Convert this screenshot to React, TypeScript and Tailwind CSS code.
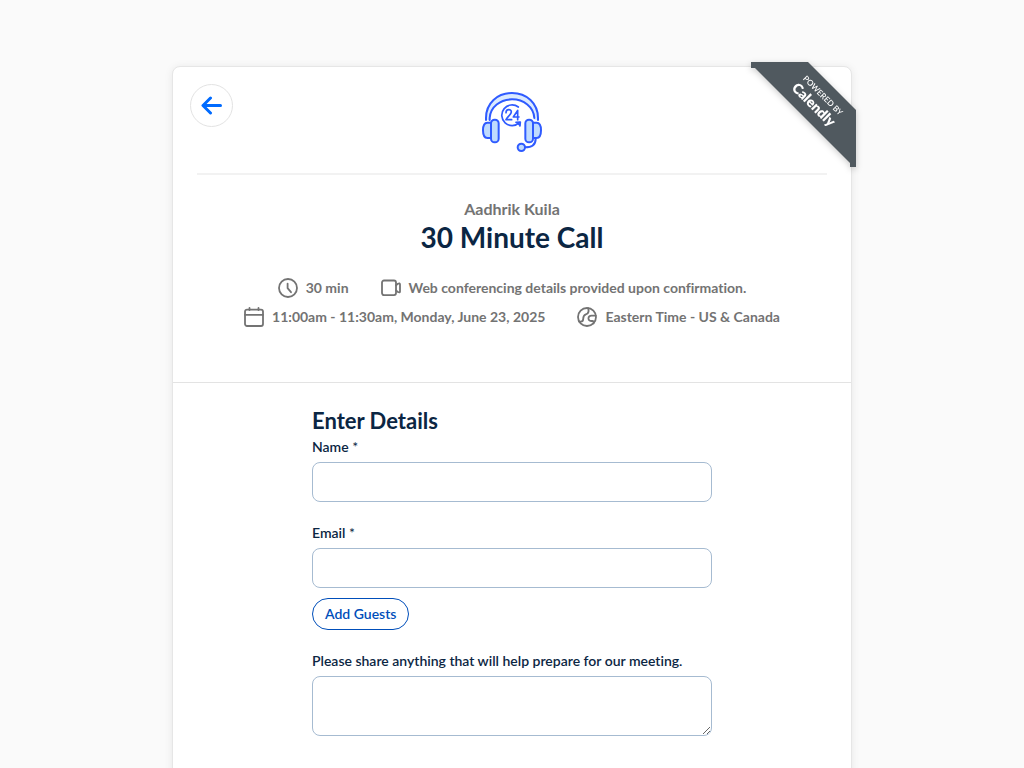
import React from "react";

function HeadsetLogo() {
  return (
    <svg viewBox="0 0 180 180" className="size-[60px]" fill="none" stroke="#2f5bff" strokeWidth="6" strokeLinecap="round" strokeLinejoin="round" role="img" aria-label="24 hour support">
      <path d="M12 84V78C12 34 46 3 90 3s78 31 78 75v6h-11V78c-3-32-33-55-67-55S26 46 23 78v6z" fill="#dbeafe" stroke="none" />
      <path d="M12 84V78C12 34 46 3 90 3s78 31 78 75v6" />
      <path d="M23 84V78C25 45 55 22 90 22s65 23 67 56" />
      <path d="M27 92H16C7 92 3 101 3 115s4 23 13 23h11z" fill="#bfdbfe" />
      <path d="M153 92h11c9 0 13 9 13 23s-4 23-13 23h-11z" fill="#bfdbfe" />
      <rect x="27" y="83" width="23" height="68" rx="11" fill="#bfdbfe" />
      <rect x="130" y="83" width="23" height="68" rx="11" fill="#bfdbfe" />
      <path d="M161 140c0 18-12 26-32 26" />
      <circle cx="118" cy="166" r="11" fill="#bfdbfe" />
      <path d="M109 45A31 31 0 1 0 112 92" strokeWidth="5" />
      <path d="M102 91l13-1-1 12M104 91l10 9" strokeWidth="5" />
      <path d="M72 62c0-12 16-12 16-2 0 8-12 13-16 23h17" strokeWidth="5" />
      <path d="M107 83V55L94 75h17" strokeWidth="5" />
    </svg>
  );
}

const iconProps = {
  viewBox: "0 0 20 20",
  className: "size-5 shrink-0",
  fill: "none",
  stroke: "currentColor",
  strokeWidth: 1.8,
  strokeLinecap: "round" as const,
  strokeLinejoin: "round" as const,
  "aria-hidden": true,
};

function ClockIcon() {
  return (
    <svg {...iconProps}>
      <circle cx="10" cy="10" r="9" />
      <path d="M9.6 5.6v4.6l3.4 4" />
    </svg>
  );
}

function VideoIcon() {
  return (
    <svg {...iconProps}>
      <rect x="1" y="2.5" width="14" height="14.6" rx="2" />
      <path d="M15 7.2l2-1.4q2-1 2 .6v7q0 1.600-2 .6l-2-1.400" />
    </svg>
  );
}

function CalendarIcon() {
  return (
    <svg {...iconProps}>
      <rect x="1" y="2.6" width="18" height="16.4" rx="2" />
      <path d="M1 7.8h18M5.5 1v2M14.5 1v2" />
    </svg>
  );
}

function GlobeIcon() {
  return (
    <svg {...iconProps}>
      <circle cx="10" cy="10" r="9" />
      <path d="M2 14.600h1.600c2 0 2.600-1.100 2.600-2.600 0-3.400.9-4 2.600-4.600 2.600-.8 3.400-2.600 2.400-6.200" />
      <path d="M18.800 8.600h-4.300c-4 0-4 5.400-.4 5.400h1.200c1.200 0 1.600 1 1.200 2.400" />
    </svg>
  );
}

function Detail({ icon, children }: { icon: React.ReactNode; children: React.ReactNode }) {
  return (
    <li className="flex h-[29px] items-center gap-2">
      {icon}
      <span>{children}</span>
    </li>
  );
}

function Ribbon() {
  return (
    <a href="#calendly" className="absolute -top-[5px] -right-[5px] block size-[105px] text-white drop-shadow-[0_2px_3px_rgba(0,0,0,0.2)]">
      <span className="flex size-full items-center justify-center bg-[#50595f] pb-7 pl-7 [clip-path:polygon(0_0,57px_0,105px_48px,105px_105px,99px_105px,99px_101px,4px_6px,0_6px)]">
        <span className="flex rotate-45 flex-col items-center whitespace-nowrap">
          <span className="text-[8px] leading-[10px] font-semibold">POWERED BY</span>
          <span className="text-[14px] leading-4 font-extrabold">Calendly</span>
        </span>
      </span>
    </a>
  );
}

const fieldClass = "block w-full rounded-lg border border-[#a6bbd1] bg-white px-3.5 text-base outline-none focus:border-[#006bff]";
const labelClass = "mb-[5px] block text-[14px] leading-5 font-semibold";

function Required() {
  return <span className="font-normal"> *</span>;
}

export default function App() {
  return (
    <div className="min-h-screen overflow-hidden bg-[#fafafa] px-4 pt-[66px] font-['Lato','Liberation_Sans',sans-serif] text-[#0b2643] [font-variant-ligatures:none]">
      <main className="relative mx-auto min-h-screen max-w-[680px] rounded-lg border border-[#e6e6e6] bg-white shadow-[0_1px_8px_rgba(0,0,0,0.08)]">
        <Ribbon />
        <header className="border-b border-[#e3e3e3] pb-[51px]">
          <div className="grid grid-cols-[43px_1fr_43px] px-[17px] pt-[17px] pb-[21px]">
            <button type="button" aria-label="Go back" className="flex size-[43px] items-center justify-center rounded-full border border-[#e3e3e3] text-[#006bff]">
              <svg viewBox="0 0 22 20" className="h-5 w-[22px]" fill="none" stroke="currentColor" strokeWidth="3" strokeLinecap="round" strokeLinejoin="round" aria-hidden="true">
                <path d="M19.5 9.5H2.5M9.5 2L2 9.5l7.5 7.5" />
              </svg>
            </button>
            <div className="flex justify-center pt-2">
              <HeadsetLogo />
            </div>
          </div>
          <hr className="mx-6 border-t-2 border-[#f2f2f2]" />
          <div className="mt-[22px] text-center text-base leading-6 font-bold text-[#737373]">Aadhrik Kuila</div>
          <h1 className="text-center text-[28px] leading-8 font-bold">30 Minute Call</h1>
          <ul className="mt-5 flex flex-wrap justify-center gap-x-8 px-6 text-[14px] leading-5 font-bold text-[#737373]">
            <Detail icon={<ClockIcon />}>30 min</Detail>
            <Detail icon={<VideoIcon />}>Web conferencing details provided upon confirmation.</Detail>
            <Detail icon={<CalendarIcon />}>11:00am - 11:30am, Monday, June 23, 2025</Detail>
            <Detail icon={<GlobeIcon />}>Eastern Time - US &amp; Canada</Detail>
          </ul>
        </header>
        <form className="mx-auto max-w-[400px] pt-6 pb-10">
          <h2 className="mb-0.5 text-[22px] leading-7 font-bold">Enter Details</h2>
          <label htmlFor="name" className={labelClass}>Name<Required /></label>
          <input id="name" type="text" required className={`${fieldClass} h-10`} />
          <label htmlFor="email" className={`${labelClass} mt-[21px]`}>Email<Required /></label>
          <input id="email" type="email" required className={`${fieldClass} h-10`} />
          <button type="button" className="mt-2.5 block h-8 rounded-full border border-[#004eba] px-3 text-[14px] leading-5 font-semibold text-[#004eba]">
            Add Guests
          </button>
          <label htmlFor="notes" className={`${labelClass} mt-[21px]`}>Please share anything that will help prepare for our meeting.</label>
          <textarea id="notes" className={`${fieldClass} h-[60px] resize-y py-2`} />
        </form>
      </main>
    </div>
  );
}
